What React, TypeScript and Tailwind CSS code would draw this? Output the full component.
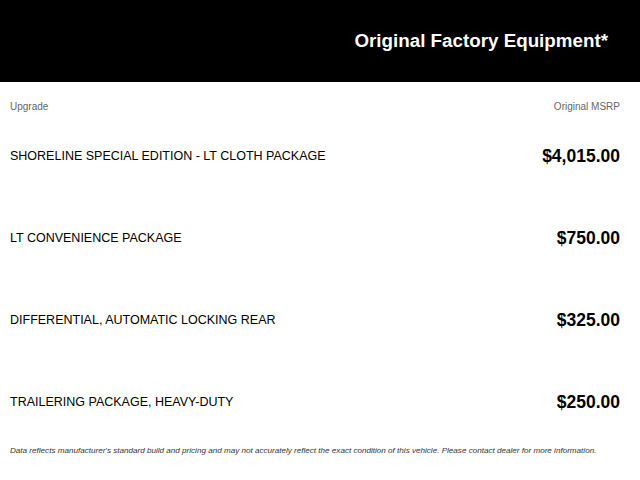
const items = [
  { name: 'SHORELINE SPECIAL EDITION - LT CLOTH PACKAGE', price: '$4,015.00' },
  { name: 'LT CONVENIENCE PACKAGE', price: '$750.00' },
  { name: 'DIFFERENTIAL, AUTOMATIC LOCKING REAR', price: '$325.00' },
  { name: 'TRAILERING PACKAGE, HEAVY-DUTY', price: '$250.00' },
]

export default function App() {
  return (
    <div className="h-[480px] w-[640px] overflow-hidden bg-white font-['Liberation_Sans',Arial,sans-serif]">
      <header className="flex h-[82px] items-center justify-end bg-black pr-[32px]">
        <h1 className="text-[18.8px] font-bold text-white">Original Factory Equipment*</h1>
      </header>

      <div className="flex h-[33px] items-start justify-between pl-[10px] pr-[20px] pt-[18px] text-[10px] leading-[13px] text-[#666]">
        <span>Upgrade</span>
        <span>Original MSRP</span>
      </div>

      {items.map((item) => (
        <div
          key={item.name}
          className="flex h-[82px] items-center justify-between pl-[10px] pr-[20px]"
        >
          <span className="text-[12.5px] text-black">{item.name}</span>
          <span className="text-[17.5px] font-bold text-black">{item.price}</span>
        </div>
      ))}

      <p className="pl-[10px] pt-[2px] text-[8.1px] italic leading-[12px] text-[#333]">
        Data reflects manufacturer's standard build and pricing and may not accurately reflect the
        exact condition of this vehicle. Please contact dealer for more information.
      </p>
    </div>
  )
}
